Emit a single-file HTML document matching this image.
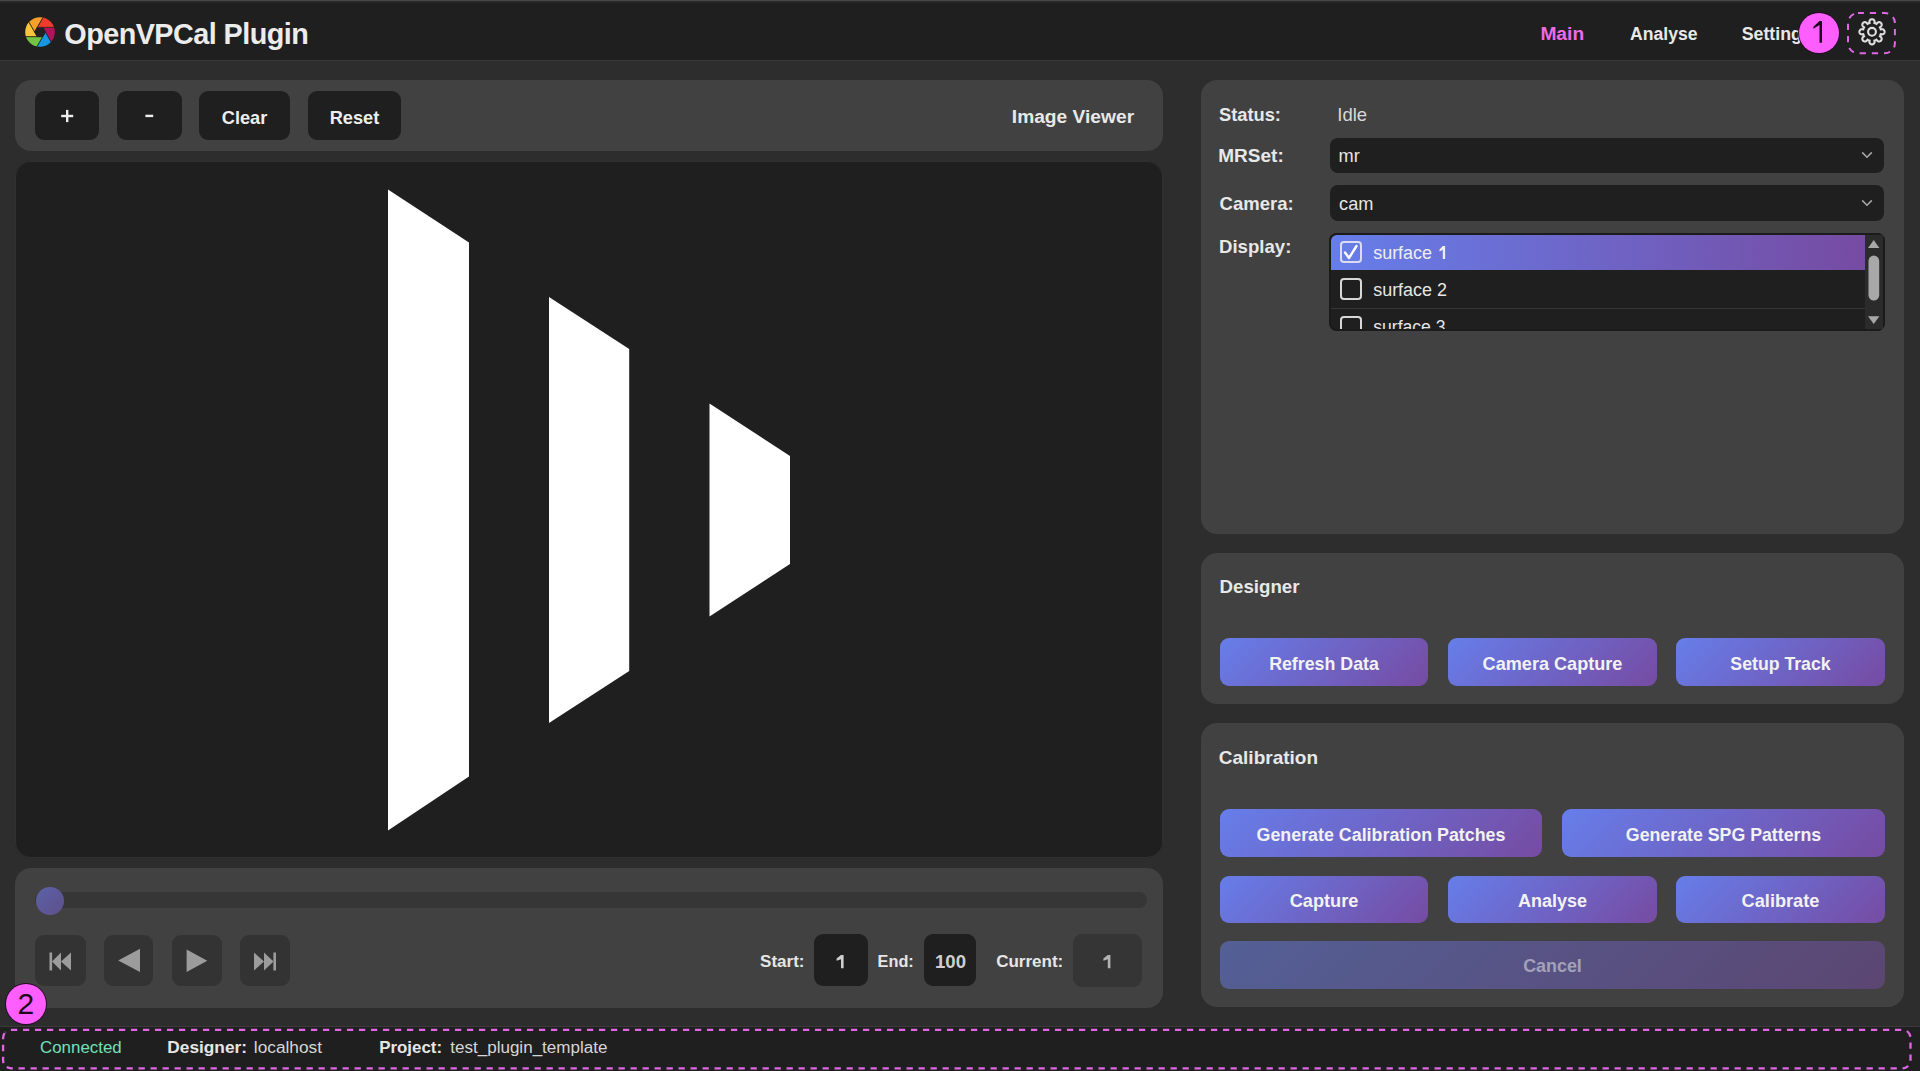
<!DOCTYPE html>
<html><head><meta charset="utf-8"><title>OpenVPCal Plugin</title>
<style>
html,body{margin:0;padding:0;}
body{width:1920px;height:1071px;overflow:hidden;background:#2d2d2d;position:relative;font-family:"Liberation Sans",sans-serif;}
.r{position:absolute;}
.t{position:absolute;line-height:1;white-space:nowrap;}
</style></head><body>
<div class="r" style="left:0px;top:0px;width:1920px;height:61px;background:#1f1f1f;"></div>
<div class="r" style="left:0px;top:0px;width:1920px;height:1px;background:#474747;"></div>
<div class="r" style="left:0px;top:1px;width:1920px;height:1px;background:#2c2c2c;"></div>
<div class="r" style="left:0px;top:2px;width:1920px;height:1px;background:#242424;"></div>
<div class="r" style="left:0px;top:60px;width:1920px;height:1px;background:#383838;"></div>
<svg class="r" style="left:19.7px;top:11.7px" width="40" height="40" viewBox="0 0 40 40"><defs><clipPath id="lc"><circle cx="20" cy="20" r="14.8"/></clipPath></defs><g clip-path="url(#lc)"><circle cx="20" cy="20" r="15" fill="#222"/><path d="M17.34 15.39 L61.74 15.39 L44.86 53.84 L22.66 15.39Z" fill="#b1125b" stroke="#1f1f1f" stroke-width="0.7"/><path d="M22.66 15.39 L44.86 53.84 L3.13 58.45 L25.33 20.00Z" fill="#1895e0" stroke="#1f1f1f" stroke-width="0.7"/><path d="M25.33 20.00 L3.13 58.45 L-21.74 24.61 L22.66 24.61Z" fill="#72c443" stroke="#1f1f1f" stroke-width="0.7"/><path d="M22.66 24.61 L-21.74 24.61 L-4.86 -13.84 L17.34 24.61Z" fill="#f9c63b" stroke="#1f1f1f" stroke-width="0.7"/><path d="M17.34 24.61 L-4.86 -13.84 L36.87 -18.45 L14.67 20.00Z" fill="#f6a02a" stroke="#1f1f1f" stroke-width="0.7"/><path d="M14.67 20.00 L36.87 -18.45 L61.74 15.39 L17.34 15.39Z" fill="#ee3b2c" stroke="#1f1f1f" stroke-width="0.7"/></g></svg>
<div class="t" style="left:64.3px;top:20.00px;font-size:28.8px;font-weight:700;color:#ececec;letter-spacing:-0.55px;">OpenVPCal Plugin</div>
<div class="t" style="left:1540.4px;top:24.00px;font-size:19.2px;font-weight:700;color:#f06ae8;">Main</div>
<div class="t" style="left:1630.0px;top:26.00px;font-size:17.6px;font-weight:700;color:#e8e8e8;">Analyse</div>
<div class="t" style="left:1741.7px;top:26.00px;font-size:17.8px;font-weight:700;color:#e8e8e8;">Settings</div>
<svg class="r" style="left:0;top:0" width="1920" height="60"><rect x="1848" y="13.1" width="46.9" height="40.1" rx="10" fill="none" stroke="#e066e6" stroke-width="2" stroke-dasharray="6.3 5.9" stroke-dashoffset="0.4"/></svg>
<svg class="r" style="left:1852px;top:12px" width="40" height="40" viewBox="0 0 40 40"><path d="M20.00 7.20 L20.20 7.21 L20.40 7.23 L20.59 7.27 L20.79 7.32 L20.98 7.39 L21.16 7.48 L21.35 7.58 L21.53 7.70 L21.70 7.84 L21.87 7.99 L22.03 8.17 L22.18 8.38 L22.32 8.62 L22.44 8.90 L22.54 9.23 L22.60 9.68 L22.40 11.02 L22.54 11.06 L22.68 11.10 L22.81 11.15 L22.95 11.19 L23.08 11.24 L23.22 11.29 L23.35 11.34 L23.48 11.39 L23.61 11.45 L23.74 11.51 L23.87 11.57 L24.00 11.63 L24.13 11.69 L24.26 11.76 L24.38 11.83 L24.51 11.90 L25.32 10.81 L25.68 10.53 L25.99 10.37 L26.27 10.26 L26.53 10.18 L26.79 10.14 L27.03 10.13 L27.26 10.14 L27.48 10.16 L27.69 10.20 L27.89 10.26 L28.08 10.33 L28.27 10.42 L28.44 10.52 L28.61 10.63 L28.76 10.76 L28.91 10.89 L29.04 11.04 L29.17 11.19 L29.28 11.36 L29.38 11.53 L29.47 11.72 L29.54 11.91 L29.60 12.11 L29.64 12.32 L29.66 12.54 L29.67 12.77 L29.66 13.01 L29.62 13.27 L29.54 13.53 L29.43 13.81 L29.27 14.12 L28.99 14.48 L27.90 15.29 L27.97 15.42 L28.04 15.54 L28.11 15.67 L28.17 15.80 L28.23 15.93 L28.29 16.06 L28.35 16.19 L28.41 16.32 L28.46 16.45 L28.51 16.58 L28.56 16.72 L28.61 16.85 L28.65 16.99 L28.70 17.12 L28.74 17.26 L28.78 17.40 L30.12 17.20 L30.57 17.26 L30.90 17.36 L31.18 17.48 L31.42 17.62 L31.63 17.77 L31.81 17.93 L31.96 18.10 L32.10 18.27 L32.22 18.45 L32.32 18.64 L32.41 18.82 L32.48 19.01 L32.53 19.21 L32.57 19.40 L32.59 19.60 L32.60 19.80 L32.59 20.00 L32.57 20.20 L32.53 20.39 L32.48 20.59 L32.41 20.78 L32.32 20.96 L32.22 21.15 L32.10 21.33 L31.96 21.50 L31.81 21.67 L31.63 21.83 L31.42 21.98 L31.18 22.12 L30.90 22.24 L30.57 22.34 L30.12 22.40 L28.78 22.20 L28.74 22.34 L28.70 22.48 L28.65 22.61 L28.61 22.75 L28.56 22.88 L28.51 23.02 L28.46 23.15 L28.41 23.28 L28.35 23.41 L28.29 23.54 L28.23 23.67 L28.17 23.80 L28.11 23.93 L28.04 24.06 L27.97 24.18 L27.90 24.31 L28.99 25.12 L29.27 25.48 L29.43 25.79 L29.54 26.07 L29.62 26.33 L29.66 26.59 L29.67 26.83 L29.66 27.06 L29.64 27.28 L29.60 27.49 L29.54 27.69 L29.47 27.88 L29.38 28.07 L29.28 28.24 L29.17 28.41 L29.04 28.56 L28.91 28.71 L28.76 28.84 L28.61 28.97 L28.44 29.08 L28.27 29.18 L28.08 29.27 L27.89 29.34 L27.69 29.40 L27.48 29.44 L27.26 29.46 L27.03 29.47 L26.79 29.46 L26.53 29.42 L26.27 29.34 L25.99 29.23 L25.68 29.07 L25.32 28.79 L24.51 27.70 L24.38 27.77 L24.26 27.84 L24.13 27.91 L24.00 27.97 L23.87 28.03 L23.74 28.09 L23.61 28.15 L23.48 28.21 L23.35 28.26 L23.22 28.31 L23.08 28.36 L22.95 28.41 L22.81 28.45 L22.68 28.50 L22.54 28.54 L22.40 28.58 L22.60 29.92 L22.54 30.37 L22.44 30.70 L22.32 30.98 L22.18 31.22 L22.03 31.43 L21.87 31.61 L21.70 31.76 L21.53 31.90 L21.35 32.02 L21.16 32.12 L20.98 32.21 L20.79 32.28 L20.59 32.33 L20.40 32.37 L20.20 32.39 L20.00 32.40 L19.80 32.39 L19.60 32.37 L19.41 32.33 L19.21 32.28 L19.02 32.21 L18.84 32.12 L18.65 32.02 L18.47 31.90 L18.30 31.76 L18.13 31.61 L17.97 31.43 L17.82 31.22 L17.68 30.98 L17.56 30.70 L17.46 30.37 L17.40 29.92 L17.60 28.58 L17.46 28.54 L17.32 28.50 L17.19 28.45 L17.05 28.41 L16.92 28.36 L16.78 28.31 L16.65 28.26 L16.52 28.21 L16.39 28.15 L16.26 28.09 L16.13 28.03 L16.00 27.97 L15.87 27.91 L15.74 27.84 L15.62 27.77 L15.49 27.70 L14.68 28.79 L14.32 29.07 L14.01 29.23 L13.73 29.34 L13.47 29.42 L13.21 29.46 L12.97 29.47 L12.74 29.46 L12.52 29.44 L12.31 29.40 L12.11 29.34 L11.92 29.27 L11.73 29.18 L11.56 29.08 L11.39 28.97 L11.24 28.84 L11.09 28.71 L10.96 28.56 L10.83 28.41 L10.72 28.24 L10.62 28.07 L10.53 27.88 L10.46 27.69 L10.40 27.49 L10.36 27.28 L10.34 27.06 L10.33 26.83 L10.34 26.59 L10.38 26.33 L10.46 26.07 L10.57 25.79 L10.73 25.48 L11.01 25.12 L12.10 24.31 L12.03 24.18 L11.96 24.06 L11.89 23.93 L11.83 23.80 L11.77 23.67 L11.71 23.54 L11.65 23.41 L11.59 23.28 L11.54 23.15 L11.49 23.02 L11.44 22.88 L11.39 22.75 L11.35 22.61 L11.30 22.48 L11.26 22.34 L11.22 22.20 L9.88 22.40 L9.43 22.34 L9.10 22.24 L8.82 22.12 L8.58 21.98 L8.37 21.83 L8.19 21.67 L8.04 21.50 L7.90 21.33 L7.78 21.15 L7.68 20.96 L7.59 20.78 L7.52 20.59 L7.47 20.39 L7.43 20.20 L7.41 20.00 L7.40 19.80 L7.41 19.60 L7.43 19.40 L7.47 19.21 L7.52 19.01 L7.59 18.82 L7.68 18.64 L7.78 18.45 L7.90 18.27 L8.04 18.10 L8.19 17.93 L8.37 17.77 L8.58 17.62 L8.82 17.48 L9.10 17.36 L9.43 17.26 L9.88 17.20 L11.22 17.40 L11.26 17.26 L11.30 17.12 L11.35 16.99 L11.39 16.85 L11.44 16.72 L11.49 16.58 L11.54 16.45 L11.59 16.32 L11.65 16.19 L11.71 16.06 L11.77 15.93 L11.83 15.80 L11.89 15.67 L11.96 15.54 L12.03 15.42 L12.10 15.29 L11.01 14.48 L10.73 14.12 L10.57 13.81 L10.46 13.53 L10.38 13.27 L10.34 13.01 L10.33 12.77 L10.34 12.54 L10.36 12.32 L10.40 12.11 L10.46 11.91 L10.53 11.72 L10.62 11.53 L10.72 11.36 L10.83 11.19 L10.96 11.04 L11.09 10.89 L11.24 10.76 L11.39 10.63 L11.56 10.52 L11.73 10.42 L11.92 10.33 L12.11 10.26 L12.31 10.20 L12.52 10.16 L12.74 10.14 L12.97 10.13 L13.21 10.14 L13.47 10.18 L13.73 10.26 L14.01 10.37 L14.32 10.53 L14.68 10.81 L15.49 11.90 L15.62 11.83 L15.74 11.76 L15.87 11.69 L16.00 11.63 L16.13 11.57 L16.26 11.51 L16.39 11.45 L16.52 11.39 L16.65 11.34 L16.78 11.29 L16.92 11.24 L17.05 11.19 L17.19 11.15 L17.32 11.10 L17.46 11.06 L17.60 11.02 L17.40 9.68 L17.46 9.23 L17.56 8.90 L17.68 8.62 L17.82 8.38 L17.97 8.17 L18.13 7.99 L18.30 7.84 L18.47 7.70 L18.65 7.58 L18.84 7.48 L19.02 7.39 L19.21 7.32 L19.41 7.27 L19.60 7.23 L19.80 7.21Z" fill="none" stroke="#dedede" stroke-width="2.1"/><circle cx="20" cy="19.8" r="3.9" fill="none" stroke="#dedede" stroke-width="2.1"/></svg>
<div class="r" style="left:1798.8px;top:12.7px;width:40.0px;height:40.0px;background:#ff5eff;border-radius:50%;box-shadow:0 0 0 1px #2a0a2a;"></div>
<svg class="r" style="left:0;top:0;overflow:visible" width="1" height="1"><path d="M1819.50 21.00 L1822.00 21.00 L1822.00 42.80 L1819.50 42.80 L1819.50 25.00 L1813.40 28.79 L1813.40 26.67 Z" fill="#1a0a1a"/></svg>
<div class="r" style="left:15px;top:80px;width:1148px;height:71px;background:#414141;border-radius:16px;"></div>
<div class="r" style="left:35px;top:91px;width:64px;height:49px;background:#1f1f1f;border-radius:9px;"></div>
<div class="r" style="left:117px;top:91px;width:65px;height:49px;background:#1f1f1f;border-radius:9px;"></div>
<div class="r" style="left:199px;top:91px;width:91px;height:49px;background:#1f1f1f;border-radius:9px;"></div>
<div class="t" style="left:199.0px;width:91.0px;text-align:center;top:109.00px;font-size:18.2px;font-weight:700;color:#eeeeee;">Clear</div>
<div class="r" style="left:308px;top:91px;width:93px;height:49px;background:#1f1f1f;border-radius:9px;"></div>
<div class="t" style="left:308.0px;width:93.0px;text-align:center;top:109.00px;font-size:18.2px;font-weight:700;color:#eeeeee;">Reset</div>
<svg class="r" style="left:0;top:0" width="200" height="140"><rect x="61.2" y="114.8" width="12" height="2.4" fill="#eeeeee"/><rect x="66" y="109.9" width="2.4" height="12.2" fill="#eeeeee"/><rect x="145.4" y="114.7" width="7.8" height="2.4" fill="#eeeeee"/></svg>
<div class="t" style="left:1011.8px;top:107.00px;font-size:19.2px;font-weight:700;color:#e8e8e8;">Image Viewer</div>
<div class="r" style="left:15px;top:161px;width:1148px;height:697px;background:#1f1f1f;border-radius:16px;box-shadow:inset 0 0 0 1px #303030;"></div>
<svg class="r" style="left:0;top:0" width="1920" height="1071"><polygon fill="#fff" points="388,189.5 469,242.5 469,776.5 388,830.5"/><polygon fill="#fff" points="549,297 629.2,349 629.2,671 549,723"/><polygon fill="#fff" points="709.5,403.5 790,456 790,564 709.5,616.5"/></svg>
<div class="r" style="left:15px;top:868px;width:1148px;height:140px;background:#414141;border-radius:16px;"></div>
<div class="r" style="left:35px;top:892px;width:1112px;height:16px;background:#363636;border-radius:8px;"></div>
<div class="r" style="left:36.4px;top:887px;width:28.000000000000007px;height:28px;background:linear-gradient(135deg,#5a62a8,#5f4f8a);border-radius:50%;"></div>
<div class="r" style="left:35px;top:935px;width:51px;height:51px;background:#333333;border-radius:9px;"></div>
<div class="r" style="left:104px;top:935px;width:49px;height:51px;background:#333333;border-radius:9px;"></div>
<div class="r" style="left:172px;top:935px;width:50px;height:51px;background:#333333;border-radius:9px;"></div>
<div class="r" style="left:240px;top:935px;width:50px;height:51px;background:#333333;border-radius:9px;"></div>
<svg class="r" style="left:0;top:0" width="400" height="1071" viewBox="0 0 400 1071"><rect x="49.5" y="952.5" width="2.6" height="18" fill="#9c9c9c"/><polygon points="52,961.5 61,952.5 61,970.5" fill="#9c9c9c"/><polygon points="61,961.5 71,952.5 71,970.5" fill="#9c9c9c"/><polygon points="118.2,960.5 140,948.7 140,972.1" fill="#9c9c9c"/><polygon points="186.6,949.5 207.3,960.8 186.6,972" fill="#9c9c9c"/><polygon points="254,952.5 264,961.5 254,970.5" fill="#9c9c9c"/><polygon points="264,952.5 273.5,961.5 264,970.5" fill="#9c9c9c"/><rect x="273.4" y="952.5" width="2.6" height="18" fill="#9c9c9c"/></svg>
<div class="t" style="left:760.1px;top:953.00px;font-size:17.0px;font-weight:700;color:#e6e6e6;">Start:</div>
<div class="r" style="left:814px;top:934px;width:54px;height:52px;background:#1f1f1f;border-radius:9px;"></div>
<svg class="r" style="left:0;top:0;overflow:visible" width="1" height="1"><path d="M841.00 955.00 L843.60 955.00 L843.60 968.20 L841.00 968.20 L841.00 959.16 L836.60 960.64 L836.60 958.43 Z" fill="#cfcfcf"/></svg>
<div class="t" style="left:877.6px;top:953.00px;font-size:16.3px;font-weight:700;color:#e6e6e6;">End:</div>
<div class="r" style="left:924px;top:934px;width:52px;height:52px;background:#1f1f1f;border-radius:9px;"></div>
<div class="t" style="left:924.0px;width:53.0px;text-align:center;top:953.00px;font-size:18.6px;font-weight:700;color:#cfcfcf;">100</div>
<div class="t" style="left:996.2px;top:953.00px;font-size:17.0px;font-weight:700;color:#e6e6e6;">Current:</div>
<div class="r" style="left:1073px;top:934px;width:69px;height:53px;background:#353535;border-radius:9px;"></div>
<svg class="r" style="left:0;top:0;overflow:visible" width="1" height="1"><path d="M1107.80 955.00 L1110.40 955.00 L1110.40 968.20 L1107.80 968.20 L1107.80 959.16 L1103.40 960.64 L1103.40 958.43 Z" fill="#b4b4b4"/></svg>
<div class="r" style="left:1201px;top:80px;width:703px;height:454px;background:#414141;border-radius:16px;"></div>
<div class="t" style="left:1219.0px;top:106.00px;font-size:18.3px;font-weight:700;color:#e8e8e8;">Status:</div>
<div class="t" style="left:1337.3px;top:106.00px;font-size:18.5px;font-weight:400;color:#d8d8d8;">Idle</div>
<div class="t" style="left:1218.3px;top:146.00px;font-size:19.0px;font-weight:700;color:#e8e8e8;">MRSet:</div>
<div class="r" style="left:1330px;top:137.5px;width:554px;height:35.0px;background:#1f1f1f;border-radius:8px;"></div>
<div class="t" style="left:1338.5px;top:147.00px;font-size:18.2px;font-weight:400;color:#e6e6e6;">mr</div>
<div class="t" style="left:1219.6px;top:195.00px;font-size:18.5px;font-weight:700;color:#e8e8e8;">Camera:</div>
<div class="r" style="left:1330px;top:185px;width:554px;height:36px;background:#1f1f1f;border-radius:8px;"></div>
<div class="t" style="left:1339.1px;top:195.00px;font-size:18.2px;font-weight:400;color:#e6e6e6;">cam</div>
<svg class="r" style="left:1860px;top:148.6px" width="14" height="12" viewBox="0 0 14 12"><polyline points="2.2,3.4 7,8.2 11.8,3.4" fill="none" stroke="#a8a8a8" stroke-width="1.5"/></svg>
<svg class="r" style="left:1860px;top:197.3px" width="14" height="12" viewBox="0 0 14 12"><polyline points="2.2,3.4 7,8.2 11.8,3.4" fill="none" stroke="#a8a8a8" stroke-width="1.5"/></svg>
<div class="t" style="left:1219.0px;top:238.00px;font-size:18.6px;font-weight:700;color:#e8e8e8;">Display:</div>
<div class="r" style="left:1329px;top:232.5px;width:556px;height:98.5px;background:#1f1f1f;border-radius:8px;box-shadow:inset 0 0 0 2px #1b1b1b;overflow:hidden;"></div>
<div class="r" style="left:1331px;top:234.5px;width:534px;height:35.0px;background:linear-gradient(90deg,#667eea,#764ba2);border-top-left-radius:6px;"></div>
<div class="r" style="left:1331px;top:308px;width:534px;height:1px;background:#363636;"></div>
<div class="r" style="left:1865px;top:234.5px;width:18px;height:94.5px;background:#2b2b2b;"></div>
<svg class="r" style="left:1860px;top:230px" width="30" height="100" viewBox="1860 230 30 100"><polygon points="1868,248 1873.7,240 1879.4,248" fill="#a8a8a8"/><rect x="1868.5" y="255.6" width="10.7" height="45" rx="5.3" fill="#a8a8a8"/><polygon points="1868,316.3 1879.4,316.3 1873.7,324" fill="#a8a8a8"/></svg>
<div class="r" style="left:1340.4px;top:241px;width:21.59999999999991px;height:22px;border:2px solid #dcdcf0;border-radius:4px;box-sizing:border-box;"></div>
<svg class="r" style="left:1340px;top:241px" width="22" height="22" viewBox="0 0 22 22"><path d="M5 11.5 L9 17 L16.5 5" fill="none" stroke="#ffffff" stroke-width="2.4" stroke-linecap="round" stroke-linejoin="round"/></svg>
<div class="t" style="left:1373.2px;top:245.00px;font-size:17.95px;font-weight:400;color:#eeeeee;">surface</div>
<svg class="r" style="left:0;top:0;overflow:visible" width="1" height="1"><path d="M1442.80 246.10 L1445.10 246.10 L1445.10 258.90 L1442.80 258.90 L1442.80 249.78 L1439.50 251.38 L1439.50 249.43 Z" fill="#eeeeee"/></svg>
<div class="r" style="left:1340.4px;top:278px;width:21.59999999999991px;height:22px;border:2px solid #d8d8d8;border-radius:4px;box-sizing:border-box;"></div>
<div class="t" style="left:1373.2px;top:282.00px;font-size:17.95px;font-weight:400;color:#e6e6e6;">surface 2</div>
<div class="r" style="left:1331px;top:309px;width:534px;height:20px;overflow:hidden;"><div class="r" style="left:9.4px;top:7.3px;width:21.6px;height:22px;border:2px solid #d8d8d8;border-radius:4px;box-sizing:border-box;"></div><div class="t" style="left:42.2px;top:10px;font-size:17.6px;color:#e6e6e6">surface 3</div></div>
<div class="r" style="left:1201px;top:553px;width:703px;height:151px;background:#414141;border-radius:16px;"></div>
<div class="t" style="left:1219.5px;top:578.00px;font-size:18.7px;font-weight:700;color:#e8e8e8;">Designer</div>
<div class="r" style="left:1220px;top:638px;width:208px;height:48px;background:linear-gradient(135deg,#667eea 0%,#764ba2 100%);border-radius:9px;"></div>
<div class="t" style="left:1220.0px;width:208.0px;text-align:center;top:656.00px;font-size:17.8px;font-weight:700;color:#f2f2f2;">Refresh Data</div>
<div class="r" style="left:1448px;top:638px;width:209px;height:48px;background:linear-gradient(135deg,#667eea 0%,#764ba2 100%);border-radius:9px;"></div>
<div class="t" style="left:1448.0px;width:209.0px;text-align:center;top:655.00px;font-size:18.1px;font-weight:700;color:#f2f2f2;">Camera Capture</div>
<div class="r" style="left:1676px;top:638px;width:209px;height:48px;background:linear-gradient(135deg,#667eea 0%,#764ba2 100%);border-radius:9px;"></div>
<div class="t" style="left:1676.0px;width:209.0px;text-align:center;top:656.00px;font-size:17.7px;font-weight:700;color:#f2f2f2;">Setup Track</div>
<div class="r" style="left:1201px;top:723px;width:703px;height:284px;background:#414141;border-radius:16px;"></div>
<div class="t" style="left:1218.8px;top:748.00px;font-size:19.0px;font-weight:700;color:#e8e8e8;">Calibration</div>
<div class="r" style="left:1220px;top:809px;width:322px;height:47.5px;background:linear-gradient(135deg,#667eea 0%,#764ba2 100%);border-radius:9px;"></div>
<div class="t" style="left:1220.0px;width:322.0px;text-align:center;top:827.00px;font-size:17.85px;font-weight:700;color:#f2f2f2;">Generate Calibration Patches</div>
<div class="r" style="left:1562px;top:809px;width:323px;height:47.5px;background:linear-gradient(135deg,#667eea 0%,#764ba2 100%);border-radius:9px;"></div>
<div class="t" style="left:1562.0px;width:323.0px;text-align:center;top:827.00px;font-size:17.75px;font-weight:700;color:#f2f2f2;">Generate SPG Patterns</div>
<div class="r" style="left:1220px;top:876px;width:208px;height:47px;background:linear-gradient(135deg,#667eea 0%,#764ba2 100%);border-radius:9px;"></div>
<div class="t" style="left:1220.0px;width:208.0px;text-align:center;top:892.00px;font-size:18.2px;font-weight:700;color:#f2f2f2;">Capture</div>
<div class="r" style="left:1448px;top:876px;width:209px;height:47px;background:linear-gradient(135deg,#667eea 0%,#764ba2 100%);border-radius:9px;"></div>
<div class="t" style="left:1448.0px;width:209.0px;text-align:center;top:892.00px;font-size:18.0px;font-weight:700;color:#f2f2f2;">Analyse</div>
<div class="r" style="left:1676px;top:876px;width:209px;height:47px;background:linear-gradient(135deg,#667eea 0%,#764ba2 100%);border-radius:9px;"></div>
<div class="t" style="left:1676.0px;width:209.0px;text-align:center;top:892.00px;font-size:18.2px;font-weight:700;color:#f2f2f2;">Calibrate</div>
<div class="r" style="left:1220px;top:941px;width:665px;height:47.5px;background:linear-gradient(135deg,#667eea 0%,#764ba2 100%);border-radius:9px;opacity:0.5;"></div>
<div class="t" style="left:1220.0px;width:665.0px;text-align:center;top:958.00px;font-size:17.9px;font-weight:700;color:rgba(240,240,240,0.5);">Cancel</div>
<div class="r" style="left:0px;top:1026px;width:1920px;height:45px;background:#1f1f1f;"></div>
<div class="r" style="left:0px;top:1026px;width:1920px;height:1px;background:#3a3a3a;"></div>
<svg class="r" style="left:0;top:1020px" width="1920" height="51" viewBox="0 1020 1920 51"><path d="M5.44 1032.24 A8.0 8.0 0 0 1 11.10 1029.90 L1902.50 1029.90 A8.0 8.0 0 0 1 1908.16 1032.24" fill="none" stroke="#e066e6" stroke-width="2.3" stroke-dasharray="6.3 5.7" stroke-dashoffset="5.92"/><path d="M5.44 1065.96 A8.0 8.0 0 0 0 11.10 1068.30 L1902.50 1068.30 A8.0 8.0 0 0 0 1908.16 1065.96" fill="none" stroke="#e066e6" stroke-width="2.3" stroke-dasharray="6.3 5.7" stroke-dashoffset="10.32"/><path d="M5.44 1032.24 A8.0 8.0 0 0 0 3.10 1037.90 L3.10 1060.30 A8.0 8.0 0 0 0 5.44 1065.96" fill="none" stroke="#e066e6" stroke-width="2.3" stroke-dasharray="6.3 5.7" stroke-dashoffset="10.82"/><path d="M1908.16 1032.24 A8.0 8.0 0 0 1 1910.50 1037.90 L1910.50 1060.30 A8.0 8.0 0 0 1 1908.16 1065.96" fill="none" stroke="#e066e6" stroke-width="2.3" stroke-dasharray="6.3 5.7" stroke-dashoffset="1.22"/></svg>
<div class="t" style="left:40.0px;top:1040.00px;font-size:16.9px;font-weight:400;color:#72e0b9;">Connected</div>
<div class="t" style="left:167.3px;top:1039.00px;font-size:17.3px;font-weight:700;color:#e6e6e6;">Designer:</div>
<div class="t" style="left:253.8px;top:1039.00px;font-size:17.3px;font-weight:400;color:#d6d6d6;">localhost</div>
<div class="t" style="left:379.2px;top:1040.00px;font-size:16.9px;font-weight:700;color:#e6e6e6;">Project:</div>
<div class="t" style="left:450.2px;top:1039.00px;font-size:17.06px;font-weight:400;color:#d6d6d6;">test_plugin_template</div>
<div class="r" style="left:5.9px;top:983.8px;width:40.0px;height:40.0px;background:#ff5eff;border-radius:50%;box-shadow:0 0 0 1px #2a0a2a;"></div>
<div class="t" style="left:5.9px;width:40.0px;text-align:center;top:989.00px;font-size:30px;font-weight:400;color:#1a0a1a;">2</div>
</body></html>
